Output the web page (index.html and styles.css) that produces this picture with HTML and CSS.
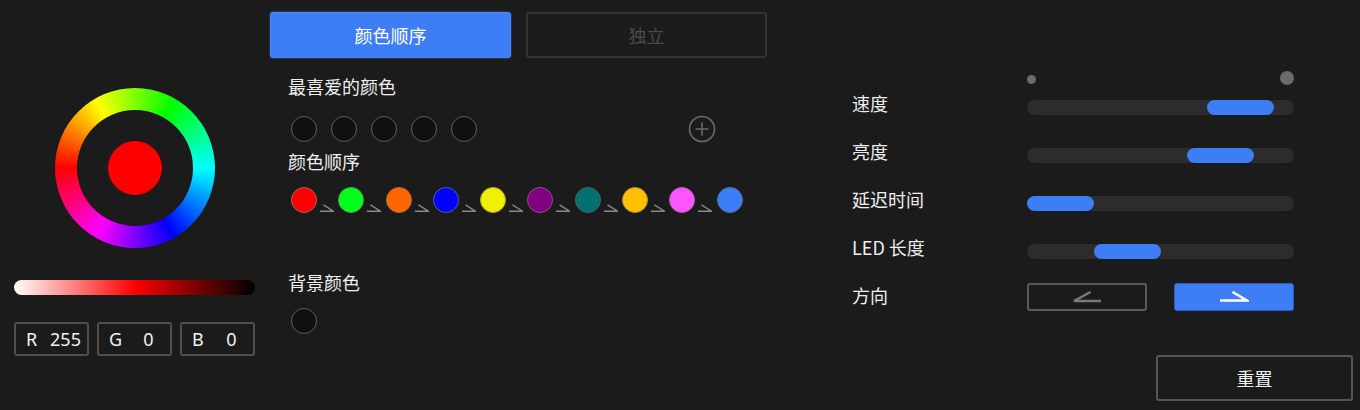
FILE: index.html
```html
<!DOCTYPE html>
<html lang="zh-CN">
<head>
<meta charset="utf-8">
<title>灯效设置</title>
<link rel="stylesheet" href="styles.css">
</head>
<body>
<div class="app">
  <div class="col-left">
    <div class="wheel">
      <div class="wheel-inner"><div class="wheel-dot"></div></div>
    </div>
    <div class="shade-bar"></div>
    <div class="rgb-row">
      <div class="rgb-box"><span class="rgb-label">R</span><span class="rgb-value">255</span></div>
      <div class="rgb-box"><span class="rgb-label">G</span><span class="rgb-value">0</span></div>
      <div class="rgb-box"><span class="rgb-label">B</span><span class="rgb-value">0</span></div>
    </div>
  </div>

  <div class="col-mid">
    <div class="tabs">
      <div class="tab tab-active">颜色顺序</div>
      <div class="tab tab-idle">独立</div>
    </div>
    <div class="section">
      <div class="label label-fav">最喜爱的颜色</div>
      <div class="fav-row">
        <span class="swatch swatch-empty"></span>
        <span class="swatch swatch-empty"></span>
        <span class="swatch swatch-empty"></span>
        <span class="swatch swatch-empty"></span>
        <span class="swatch swatch-empty"></span>
        <svg class="plus" width="28" height="28" viewBox="0 0 28 28"><circle cx="14" cy="14" r="12.5" fill="none" stroke="#6a6a6a" stroke-width="1.6"/><path d="M14 7.5V20.5M7.5 14H20.5" stroke="#6a6a6a" stroke-width="1.6"/></svg>
      </div>
      <div class="label label-order">颜色顺序</div>
      <div class="order-row">
        <span class="swatch c-red"></span><svg class="chain" width="14" height="8" viewBox="0 0 14 8"><path d="M3.5 0.8L13.5 7.2H0" fill="none" stroke="#8a8a8a" stroke-width="1.4"/></svg>
        <span class="swatch c-green"></span><svg class="chain" width="14" height="8" viewBox="0 0 14 8"><path d="M3.5 0.8L13.5 7.2H0" fill="none" stroke="#8a8a8a" stroke-width="1.4"/></svg>
        <span class="swatch c-orange"></span><svg class="chain" width="14" height="8" viewBox="0 0 14 8"><path d="M3.5 0.8L13.5 7.2H0" fill="none" stroke="#8a8a8a" stroke-width="1.4"/></svg>
        <span class="swatch c-blue"></span><svg class="chain" width="14" height="8" viewBox="0 0 14 8"><path d="M3.5 0.8L13.5 7.2H0" fill="none" stroke="#8a8a8a" stroke-width="1.4"/></svg>
        <span class="swatch c-yellow"></span><svg class="chain" width="14" height="8" viewBox="0 0 14 8"><path d="M3.5 0.8L13.5 7.2H0" fill="none" stroke="#8a8a8a" stroke-width="1.4"/></svg>
        <span class="swatch c-purple"></span><svg class="chain" width="14" height="8" viewBox="0 0 14 8"><path d="M3.5 0.8L13.5 7.2H0" fill="none" stroke="#8a8a8a" stroke-width="1.4"/></svg>
        <span class="swatch c-teal"></span><svg class="chain" width="14" height="8" viewBox="0 0 14 8"><path d="M3.5 0.8L13.5 7.2H0" fill="none" stroke="#8a8a8a" stroke-width="1.4"/></svg>
        <span class="swatch c-amber"></span><svg class="chain" width="14" height="8" viewBox="0 0 14 8"><path d="M3.5 0.8L13.5 7.2H0" fill="none" stroke="#8a8a8a" stroke-width="1.4"/></svg>
        <span class="swatch c-pink"></span><svg class="chain" width="14" height="8" viewBox="0 0 14 8"><path d="M3.5 0.8L13.5 7.2H0" fill="none" stroke="#8a8a8a" stroke-width="1.4"/></svg>
        <span class="swatch c-sky"></span>
      </div>
      <div class="label label-bg">背景颜色</div>
      <div class="bg-row">
        <span class="swatch swatch-empty"></span>
      </div>
    </div>
  </div>

  <div class="col-right">
    <div class="dots-row">
      <span class="dot-small"></span>
      <span class="dot-big"></span>
    </div>
    <div class="row row-first">
      <div class="row-label">速度</div>
      <div class="track"><div class="thumb" style="margin-left:180px"></div></div>
    </div>
    <div class="row">
      <div class="row-label">亮度</div>
      <div class="track"><div class="thumb" style="margin-left:160px"></div></div>
    </div>
    <div class="row">
      <div class="row-label">延迟时间</div>
      <div class="track"><div class="thumb" style="margin-left:0px"></div></div>
    </div>
    <div class="row">
      <div class="row-label">LED 长度</div>
      <div class="track"><div class="thumb" style="margin-left:67px"></div></div>
    </div>
    <div class="row">
      <div class="row-label">方向</div>
      <div class="dir-group">
        <div class="dir-btn dir-idle">
          <svg width="30" height="12" viewBox="0 0 30 12"><path d="M18.5 1L2 10H29" fill="none" stroke="#7a7a7a" stroke-width="2.4" stroke-linejoin="miter"/></svg>
        </div>
        <div class="dir-btn dir-active">
          <svg width="30" height="12" viewBox="0 0 30 12"><path d="M13.5 1L28 9.5H1" fill="none" stroke="#ffffff" stroke-width="2.6" stroke-linejoin="miter"/></svg>
        </div>
      </div>
    </div>
    <div class="reset">重置</div>
  </div>
</div>
</body>
</html>
```

FILE: styles.css
```css
html, body {
  margin: 0;
  padding: 0;
  background: #1b1b1b;
}

body {
  font-family: "Noto Sans CJK SC", "Noto Sans", sans-serif;
  color: #efefef;
  font-size: 18px;
}

.app {
  display: flex;
  width: 1360px;
  height: 410px;
  overflow: hidden;
}

/* ---------- left column ---------- */
.col-left {
  width: 270px;
  flex: none;
  padding: 88px 0 0 14px;
  box-sizing: border-box;
  display: flex;
  flex-direction: column;
}

.wheel {
  width: 160px;
  height: 160px;
  margin-left: 41px;
  border-radius: 50%;
  background: conic-gradient(from 270deg, #ff0000, #ffff00, #00ff00, #00ffff, #0000ff, #ff00ff, #ff0000);
  display: flex;
  align-items: center;
  justify-content: center;
}

.wheel-inner {
  width: 116px;
  height: 116px;
  border-radius: 50%;
  background: #1b1b1b;
  display: flex;
  align-items: center;
  justify-content: center;
}

.wheel-dot {
  width: 54px;
  height: 54px;
  border-radius: 50%;
  background: #ff0000;
}

.shade-bar {
  width: 241px;
  height: 15px;
  margin-top: 32px;
  border-radius: 8px;
  background: linear-gradient(to right, #ffffff 0%, #ff0000 50%, #000000 100%);
}

.rgb-row {
  display: flex;
  gap: 8px;
  margin-top: 27px;
}

.rgb-box {
  width: 75px;
  height: 34px;
  box-sizing: border-box;
  border: 2px solid #4e4e4e;
  border-radius: 3px;
  display: flex;
  align-items: center;
  padding-left: 10px;
  font-family: "Noto Sans", "Open Sans", sans-serif;
  font-size: 18px;
  color: #f2f2f2;
}

.rgb-label {
  width: 18px;
}

.rgb-value {
  flex: 1;
  text-align: center;
}

/* ---------- middle column ---------- */
.col-mid {
  width: 497px;
  flex: none;
  padding-top: 12px;
}

.tabs {
  display: flex;
  gap: 15px;
}

.tab {
  width: 241px;
  height: 46px;
  box-sizing: border-box;
  border-radius: 3px;
  display: flex;
  align-items: center;
  justify-content: center;
  font-size: 18px;
}

.tab-active {
  background: #3d7df6;
  color: #ffffff;
  box-shadow: 0 0 2px rgba(80, 140, 255, 0.7);
  border: 1px solid #4a86f5;
}

.tab-idle {
  border: 2px solid #333333;
  color: #4b4b4b;
}

.section {
  padding-left: 18px;
}

.label {
  line-height: 24px;
  height: 24px;
}

.label-fav {
  margin-top: 16px;
}

.fav-row {
  display: flex;
  align-items: center;
  gap: 14px;
  margin-top: 18px;
  margin-left: 3px;
  height: 26px;
}

.plus {
  margin-left: 197px;
}

.label-order {
  margin-top: 7px;
}

.order-row {
  display: flex;
  align-items: flex-end;
  margin-top: 14px;
  margin-left: 3px;
  height: 26px;
}

.chain {
  margin: 0 4.3px 1px 3px;
  flex: none;
}

.label-bg {
  margin-top: 57px;
}

.bg-row {
  display: flex;
  margin-top: 14px;
  margin-left: 3px;
}

.swatch {
  width: 26px;
  height: 26px;
  box-sizing: border-box;
  border-radius: 50%;
  border: 1.5px solid #6a6a6a;
  flex: none;
}

.swatch-empty {
  background: #101010;
  border-color: #5e5e5e;
}

.c-red { background: #ff0000; border-color: #b35a5a; }
.c-green { background: #00ff1a; border-color: #4aa74f; }
.c-orange { background: #ff6600; border-color: #b0703a; }
.c-blue { background: #0000ff; border-color: #4e5ac0; }
.c-yellow { background: #f0f000; border-color: #b4a830; }
.c-purple { background: #800080; border-color: #8d4f8d; }
.c-teal { background: #007070; border-color: #3e6a6a; }
.c-amber { background: #ffc000; border-color: #b99030; }
.c-pink { background: #ff55ff; border-color: #b060b0; }
.c-sky { background: #3d7df6; border-color: #4f6fa8; }

/* ---------- right column ---------- */
.col-right {
  flex: 1;
  padding-left: 85px;
  display: flex;
  flex-direction: column;
}

.dots-row {
  margin-top: 71px;
  margin-left: 175px;
  width: 267px;
  height: 14px;
  display: flex;
  align-items: center;
  justify-content: space-between;
}

.dot-small {
  width: 9px;
  height: 9px;
  border-radius: 50%;
  background: #6b6b6b;
  margin-top: 3px;
}

.dot-big {
  width: 14px;
  height: 14px;
  border-radius: 50%;
  background: #6b6b6b;
}

.row {
  display: flex;
  align-items: center;
  height: 48px;
}

.row-first {
  margin-top: -5px;
}

.row-label {
  width: 175px;
  flex: none;
  line-height: 24px;
  margin-bottom: 2px;
}

.track {
  width: 267px;
  height: 15px;
  border-radius: 8px;
  background: #2c2c2c;
  margin-top: 6px;
  display: flex;
}

.thumb {
  width: 67px;
  height: 15px;
  border-radius: 8px;
  background: #3d7df6;
}

.dir-group {
  display: flex;
  gap: 27px;
  margin-top: 2px;
}

.dir-btn {
  width: 120px;
  height: 28px;
  box-sizing: border-box;
  border-radius: 3px;
  display: flex;
  align-items: center;
  justify-content: center;
}

.dir-idle {
  border: 2px solid #5a5a5a;
}

.dir-active {
  background: #3d7df6;
  border: 1px solid #2f5fb8;
}

.reset {
  align-self: flex-end;
  margin-right: 7px;
  margin-top: 35px;
  width: 197px;
  height: 46px;
  box-sizing: border-box;
  border: 2px solid #555555;
  border-radius: 3px;
  display: flex;
  align-items: center;
  justify-content: center;
  font-size: 18px;
  color: #f2f2f2;
}
```
